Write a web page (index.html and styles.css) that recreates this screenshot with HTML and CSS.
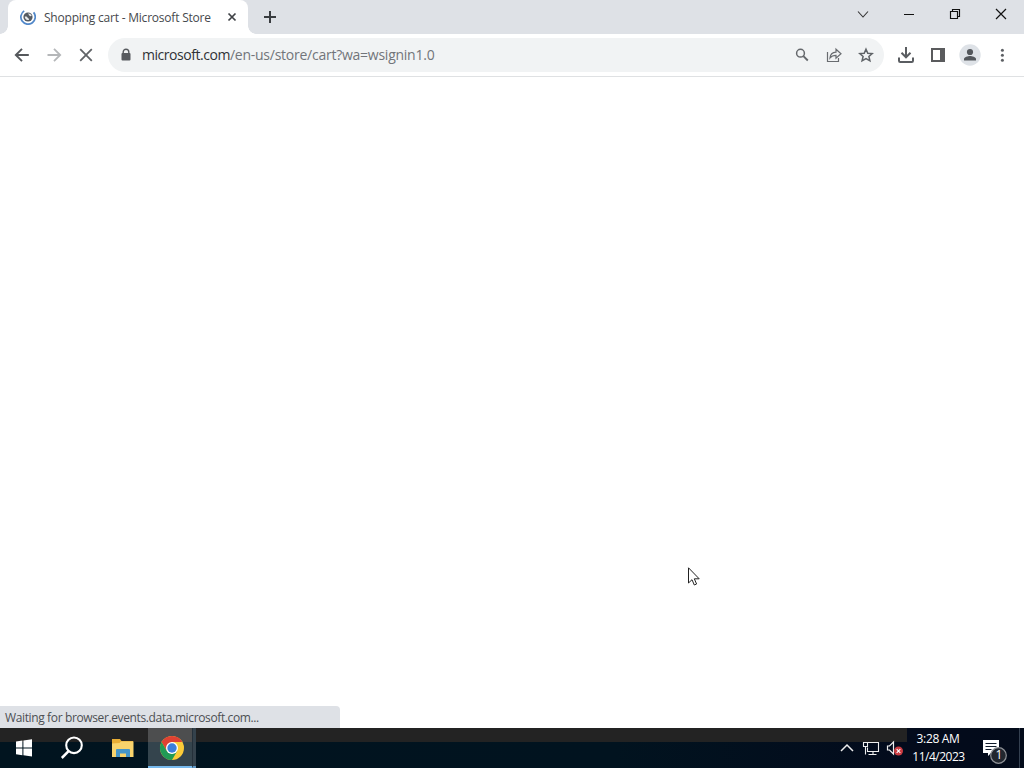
FILE: index.html
```html
<!DOCTYPE html>
<html lang="en">
<head>
<meta charset="utf-8">
<title>Shopping cart - Microsoft Store</title>
<link rel="stylesheet" href="styles.css">
</head>
<body>
<div class="screen">
  <header class="tabstrip">
    <div class="tab">
      <svg class="favicon" width="16" height="16" viewBox="0 0 16 16"><path d="M4.200 1.900A7.200 7.200 0 1 0 13.600 3.400" fill="none" stroke="#5087c9" stroke-width="1.700"/><circle cx="8" cy="8" r="4.600" fill="#555b62"/><path d="M4.700 7.800c1.200-.7 2.400-.2 2.800.8.3 1 1.400.5 1.500 2.300-2.500.7-4-.8-4.300-3.100zM8 4.500c1.800-.3 3.300.7 3.700 2.300-1 .7-2.200.5-2.500-.5z" fill="#e8eaec"/></svg>
      <span class="tab-title">Shopping cart - Microsoft Store</span>
      <svg class="tab-close" width="16" height="16" viewBox="0 0 16 16"><path d="M4.500 4.500l7 7M11.500 4.500l-7 7" stroke="#3f4246" stroke-width="1.700"/></svg>
    </div>
    <svg class="new-tab" width="16" height="16" viewBox="0 0 16 16"><path d="M8 2v12M2 8h12" stroke="#393c40" stroke-width="2"/></svg>
    <div class="window-controls">
      <svg width="46" height="28" viewBox="0 0 46 28"><path d="M18 11.500l5 5.500 5-5.500" fill="none" stroke="#333" stroke-width="1.100"/></svg>
      <svg width="46" height="28" viewBox="0 0 46 28"><path d="M18 14.500h10" stroke="#111"/></svg>
      <svg width="46" height="28" viewBox="0 0 46 28"><path d="M18.500 11.500h7v7h-7zM20.500 11.500v-2h7v7h-2" fill="none" stroke="#111" stroke-width="1.150"/></svg>
      <svg width="46" height="28" viewBox="0 0 46 28"><path d="M18 9l10 10M28 9l-10 10" stroke="#111" stroke-width="1.200"/></svg>
    </div>
  </header>
  <nav class="toolbar">
    <div class="nav-buttons">
      <svg width="32" height="32" viewBox="0 0 32 32"><path d="M22.800 16H9.800M16 9.800L9.800 16l6.200 6.200" fill="none" stroke="#55585c" stroke-width="1.900"/></svg>
      <svg width="32" height="32" viewBox="0 0 32 32"><path d="M9.500 16h12.500M16 9.800l6.200 6.200-6.200 6.200" fill="none" stroke="#b5b7b9" stroke-width="1.800"/></svg>
      <svg width="32" height="32" viewBox="0 0 32 32"><path d="M10.200 10.200l11.600 11.600M21.800 10.200L10.200 21.800" stroke="#606367" stroke-width="1.800"/></svg>
    </div>
    <div class="omnibox">
      <svg class="lock" width="12" height="14" viewBox="0 0 12 14"><path d="M3.200 6V4a2.800 2.800 0 0 1 5.600 0v2" fill="none" stroke="#585b5f" stroke-width="1.400"/><rect x="1.500" y="5" width="9" height="7.500" rx="1" fill="#585b5f"/></svg>
      <span class="url"><span class="host">microsoft.com</span>/en-us/store/cart?wa=wsignin1.0</span>
      <div class="omni-actions">
        <svg width="32" height="32" viewBox="0 0 32 32"><circle cx="14.500" cy="14.200" r="3.900" fill="none" stroke="#65686c" stroke-width="1.500"/><path d="M17.400 17.100l4.400 4.400" stroke="#65686c" stroke-width="1.900"/></svg>
        <svg width="32" height="32" viewBox="0 0 32 32"><path d="M9.500 13v9.500h11V19" fill="none" stroke="#696c70" stroke-width="1.200"/><path d="M12 19c.3-3.800 2.300-5.800 6-5.900v-2.900l5 4.500-5 4.500v-2.800c-2.900 0-4.500.7-6 2.600z" fill="none" stroke="#696c70" stroke-width="1.200"/></svg>
        <svg width="32" height="32" viewBox="0 0 32 32"><path d="M16 10.200l1.800 4 4.400.4-3.300 2.900 1 4.300-3.900-2.300-3.900 2.300 1-4.300-3.300-2.900 4.400-.4z" fill="none" stroke="#5f6367" stroke-width="1.500"/></svg>
      </div>
    </div>
    <div class="tool-actions">
      <svg width="32" height="32" viewBox="0 0 32 32"><path d="M16 8v10M11.500 13.800l4.500 4.500 4.500-4.500" fill="none" stroke="#5a5d61" stroke-width="2"/><path d="M9 18.500v3.200q0 1.200 1.200 1.200h11.600q1.200 0 1.200-1.200v-3.200" fill="none" stroke="#5a5d61" stroke-width="2"/></svg>
      <svg width="32" height="32" viewBox="0 0 32 32"><path d="M9 9h14v14H9zM11 11v10h7V11z" fill="#5a5b5d" fill-rule="evenodd"/></svg>
      <svg width="32" height="32" viewBox="0 0 32 32"><circle cx="16" cy="16" r="10.700" fill="#dee2e7"/><circle cx="16" cy="13" r="3.100" fill="#53575c"/><path d="M10 21.500v-1.400c0-2 4-3 6-3s6 1 6 3v1.400z" fill="#53575c"/></svg>
      <svg width="32" height="32" viewBox="0 0 32 32"><g fill="#5d6064"><circle cx="16.400" cy="11.200" r="1.500"/><circle cx="16.400" cy="16.200" r="1.500"/><circle cx="16.400" cy="21.200" r="1.500"/></g></svg>
    </div>
  </nav>
  <main class="page">
    <svg class="cursor" width="14" height="21" viewBox="0 0 14 21"><path d="M1.500 1.800v15.200l3.500-3.300 2.300 5.300 2.300-1-2.300-5.200h4.900z" fill="#fff" stroke="#222" stroke-width="1"/></svg>
    <div class="status"><span>Waiting for browser.events.data.microsoft.com...</span></div>
  </main>
  <footer class="taskbar">
    <div class="launchers">
      <svg width="48" height="40" viewBox="0 0 48 40"><path d="M16 13.500l6.400-.9v6.800H16zM23.400 12.500l8.600-1.200v8.100h-8.600zM16 20.500h6.400v6.700L16 26.300zM23.400 20.500H32V28.400l-8.600-1.100z" fill="#fff"/></svg>
      <svg width="48" height="40" viewBox="0 0 48 40"><circle cx="26" cy="17.300" r="7.800" fill="none" stroke="#fff" stroke-width="2.100"/><path d="M20.600 23.200L13.800 30" stroke="#fff" stroke-width="2.500"/></svg>
      <svg width="48" height="40" viewBox="0 0 48 40"><path d="M16 11h8l1.500 2H37v4H16z" fill="#e8ad35"/><path d="M16 15.500l7.500-.5 1.500-1.500H37.500V29H16z" fill="#f8d36c"/><path d="M20 29v-7q0-1 1-1h12q1 0 1 1v7h-4v-3.500h-6V29z" fill="#4595c8"/></svg>
      <div class="task-active">
        <svg width="44" height="38" viewBox="0 0 44 38"><circle cx="24" cy="20" r="12" fill="#fbcb38"/><path d="M13.600 14A12 12 0 0 1 34.400 14H24l-5.200 9z" fill="#df4133"/><path d="M13.600 14L18.800 23 24 26l5.200-3L24 32A12 12 0 0 1 13.600 14z" fill="#219b55"/><circle cx="24" cy="20" r="6" fill="#fff"/><circle cx="24" cy="20" r="4.700" fill="#3c7edc"/></svg>
      </div>
      <div class="task-stack"></div>
    </div>
    <div class="tray">
      <svg class="chevron" width="24" height="40" viewBox="0 0 24 40"><path d="M6 23l6-6 6 6" fill="none" stroke="#eee" stroke-width="1.500"/></svg>
      <svg width="24" height="40" viewBox="0 0 24 40"><path d="M9 14.500h10.500v9H8.500v-4M4.500 14.500h4v4h-4zM6.500 18.500v8M14 23.500v3M9.500 26.500h8" fill="none" stroke="#eee" stroke-width="1.100"/></svg>
      <svg width="24" height="40" viewBox="0 0 24 40"><path d="M4.500 18h2l4-4v12l-4-4h-2z" fill="none" stroke="#eee" stroke-width="1.200"/><circle cx="15.500" cy="23" r="4.500" fill="#cb3c42"/><path d="M13.700 21.200l3.600 3.600M17.300 21.200l-3.600 3.600" stroke="#fff" stroke-width="1.100"/></svg>
    </div>
    <div class="clock"><span class="time">3:28 AM</span><span class="date">11/4/2023</span></div>
    <div class="notice">
      <svg width="26" height="27" viewBox="0 0 26 27"><path d="M1 2h16v13H9l-3 3v-3H1z" fill="#fff"/><path d="M3.500 5.500h11M3.500 8.500h11M3.500 11.500h6" stroke="#101b2a" stroke-width="1.100"/><circle cx="16.500" cy="17.500" r="7.800" fill="#22272f" stroke="#8f9297" stroke-width="1.200"/></svg>
      <span class="notice-count">1</span>
    </div>
    <div class="show-desktop"></div>
  </footer>
</div>
</body>
</html>
```
FILE: styles.css
```css
* { box-sizing: border-box; }
body { margin: 0; font-family: "Open Sans", "Noto Sans", sans-serif; }
svg { display: block; flex: none; }
.screen { width: 1024px; height: 768px; display: flex; flex-direction: column; overflow: hidden; background: #fff; }
.tabstrip { height: 34px; flex: none; display: flex; background: #dee1e6; }
.tab { position: relative; width: 240px; height: 34px; margin-left: 8px; padding: 0 8px 0 12px; display: flex; align-items: center; background: #fff; border-radius: 8px 8px 0 0; }
.tab::before, .tab::after { content: ""; position: absolute; bottom: 0; width: 8px; height: 8px; }
.tab::before { left: -8px; background: radial-gradient(circle at 0 0, transparent 7.5px, #fff 8px); }
.tab::after { right: -8px; background: radial-gradient(circle at 100% 0, transparent 7.5px, #fff 8px); }
.tab-title { flex: 1; margin-left: 8px; padding-top: 1px; font-size: 12px; line-height: 16px; letter-spacing: -0.21px; color: #46494d; white-space: nowrap; }
.new-tab { margin: 9px 0 0 14px; }
.window-controls { display: flex; margin-left: auto; }
.toolbar { height: 43px; flex: none; display: flex; align-items: center; padding: 0 6px; border-bottom: 1px solid #dfe1e3; background: #fff; }
.nav-buttons, .omni-actions, .tool-actions { display: flex; }
.omnibox { width: 776px; height: 34px; margin-left: 6px; padding: 0 2px 0 12px; display: flex; align-items: center; border-radius: 17px; background: #f1f3f4; }
.url { margin-left: 10px; font-size: 14px; line-height: 20px; white-space: nowrap; letter-spacing: -0.25px; color: #72757a; }
.host { color: #303236; letter-spacing: -0.46px; }
.omni-actions { margin-left: auto; }
.tool-actions { margin-left: 6px; }
.page { position: relative; flex: 1; display: flex; align-items: flex-end; background: #fff; }
.cursor { position: absolute; left: 687px; top: 489px; }
.status { width: 340px; height: 22px; padding: 0 5px; border-radius: 0 4px 0 0; background: #dee1e6; font-size: 12px; line-height: 24px; letter-spacing: -0.37px; color: #4c4f53; white-space: nowrap; }
.taskbar { height: 40px; flex: none; display: flex; color: #fff; background: linear-gradient(#232323, #232323) 0 0 / 907px 14px no-repeat, linear-gradient(90deg, #01141f, #01131f 60%, #030b1c 88%, #030b1a); }
.launchers { display: flex; }
.task-active { width: 44px; margin-left: 4px; border-bottom: 2px solid #76b9ed; background: linear-gradient(#4d4e4f 14px, #34444d 14px); }
.task-stack { width: 4px; border-left: 1px solid #24303a; border-bottom: 2px solid #5f96c3; background: #34424c; }
.tray { display: flex; margin-left: auto; }
.clock { width: 62px; display: flex; flex-direction: column; align-items: center; padding-top: 2px; font-size: 12px; line-height: 18px; white-space: nowrap; }
.time { letter-spacing: -0.35px; }
.date { padding-left: 1px; letter-spacing: -0.5px; }
.notice { position: relative; width: 50px; padding: 10px 0 0 13px; }
.notice-count { position: absolute; left: 26px; top: 19px; width: 8px; text-align: center; font-size: 12px; line-height: 16px; }
.show-desktop { width: 5px; border-left: 1px solid #344050; }
```
